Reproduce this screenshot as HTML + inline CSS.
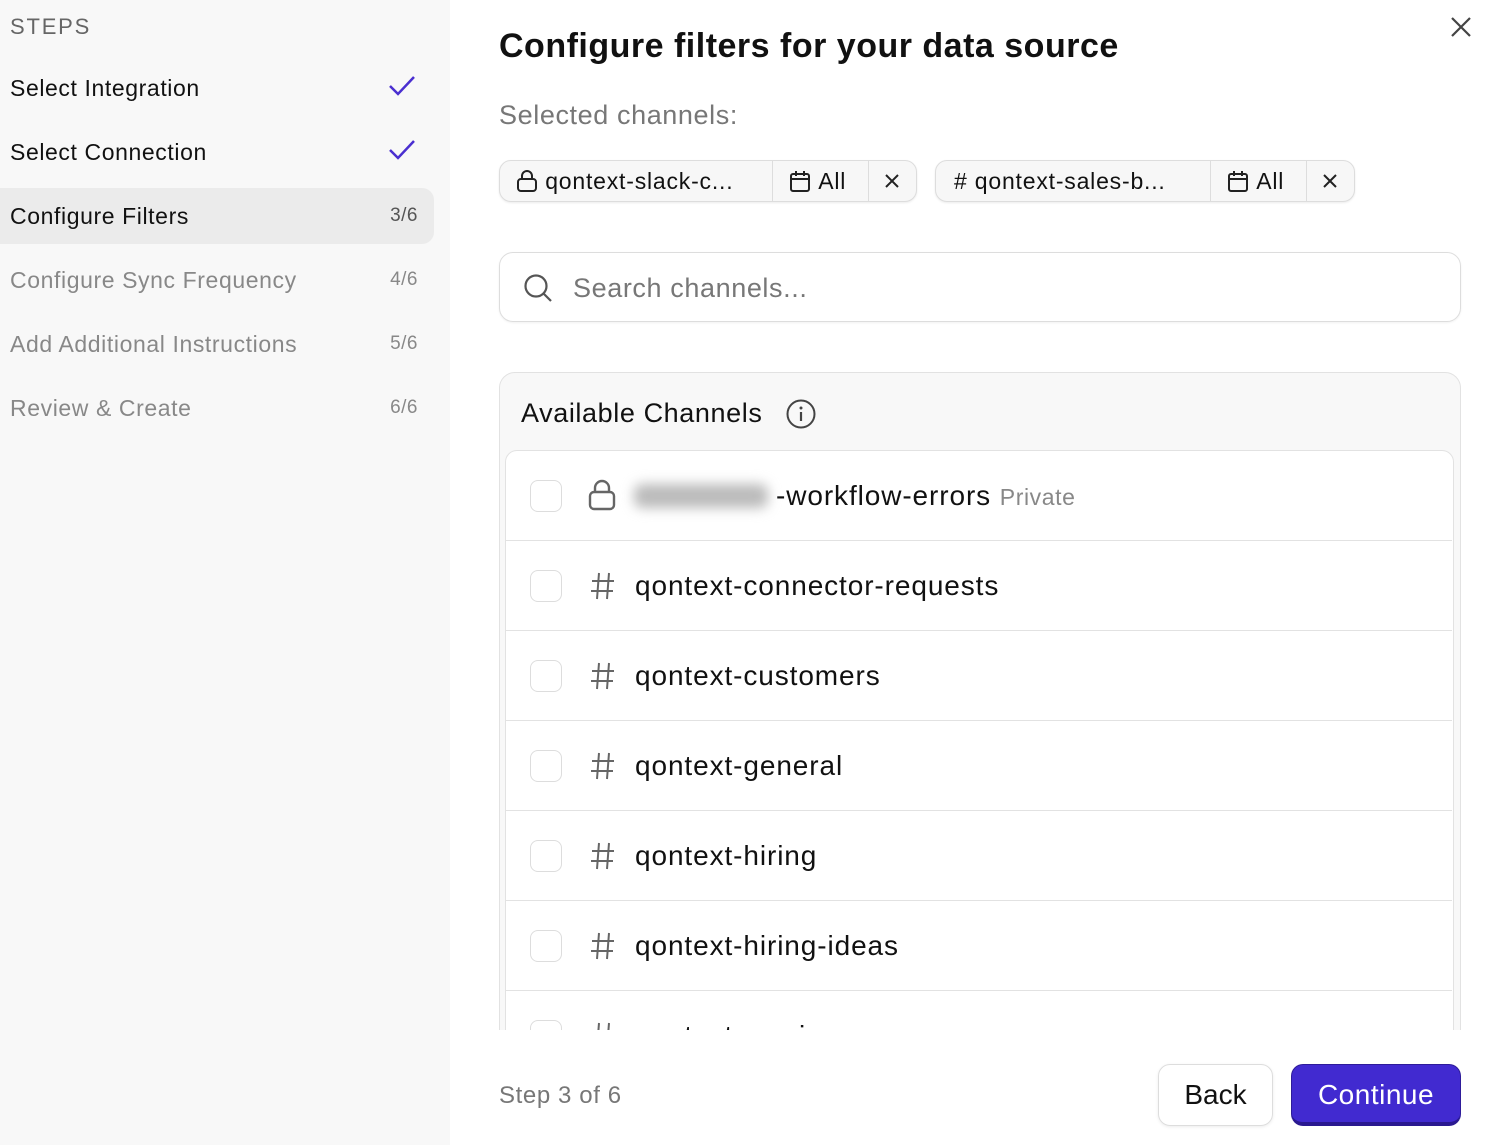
<!DOCTYPE html>
<html><head><meta charset="utf-8"><style>
*{box-sizing:border-box;margin:0;padding:0}
body{width:1489px;height:1145px;overflow:hidden;font-family:"Liberation Sans",sans-serif;background:#fff;position:relative;color:#111}
.side{position:absolute;left:0;top:0;width:450px;height:1145px;background:#f8f8f8}
.steps{position:absolute;left:10px;top:14px;font-size:22px;letter-spacing:1.8px;color:#666}
.it{position:absolute;left:0;width:434px;height:56px;font-size:23px;padding-left:10px;line-height:56px;border-radius:0 12px 12px 0;letter-spacing:0.6px}
.it .n{position:absolute;right:16px;top:0;font-size:19px;color:#888;letter-spacing:0.5px}
.it.g{color:#888}
.it svg{position:absolute;right:18px;top:14px}
.abs{position:absolute}
.chip{position:absolute;top:160px;height:42px;border:1.5px solid #ddd;border-radius:12px;background:#f7f7f7;box-shadow:0 1px 2px rgba(0,0,0,.08);font-size:23px;display:flex;align-items:center;letter-spacing:0.8px}
.chip span{display:flex;align-items:center;height:100%}
.sep{border-left:1.5px solid #ddd}
.search{position:absolute;left:499px;top:252px;width:962px;height:70px;border:1.5px solid #ddd;border-radius:14px;box-shadow:0 1px 2px rgba(0,0,0,.06)}
.panel{position:absolute;left:499px;top:372px;width:962px;height:700px;border:1.5px solid #e2e2e2;border-radius:16px;background:#f8f8f8}
.list{position:absolute;left:505px;top:450px;width:949px;height:640px;border:1.5px solid #e2e2e2;border-radius:12px;background:#fff}
.row{position:absolute;left:0;width:946px;height:90px;border-bottom:1.5px solid #e2e2e2}
.cb{position:absolute;left:24px;top:29px;width:32px;height:32px;border:1.5px solid #ddd;border-radius:8px}
.row .ic{position:absolute;left:84px;top:29px}
.row .t{position:absolute;left:129px;top:29px;font-size:28px;line-height:32px;letter-spacing:0.9px}
.foot{position:absolute;left:450px;top:1030px;width:1039px;height:115px;background:#fff}
</style></head><body>
<div class="side">
<div class="steps">STEPS</div>
<div class="it" style="top:60px">Select Integration<svg width="28" height="24" viewBox="0 0 28 24"><path d="M2 12l8 8L26 3" fill="none" stroke="#4a2fd0" stroke-width="2.5"/></svg></div>
<div class="it" style="top:124px">Select Connection<svg width="28" height="24" viewBox="0 0 28 24"><path d="M2 12l8 8L26 3" fill="none" stroke="#4a2fd0" stroke-width="2.5"/></svg></div>
<div class="it" style="top:188px;background:#ebebeb">Configure Filters<span class="n" style="color:#555">3/6</span></div>
<div class="it g" style="top:252px">Configure Sync Frequency<span class="n">4/6</span></div>
<div class="it g" style="top:316px">Add Additional Instructions<span class="n">5/6</span></div>
<div class="it g" style="top:380px">Review &amp; Create<span class="n">6/6</span></div>
</div>
<div class="abs" style="left:499px;top:27px;font-size:34px;font-weight:bold;letter-spacing:0.5px">Configure filters for your data source</div>
<svg class="abs" style="left:1450px;top:16px" width="22" height="22"><path d="M2 2L20 20M20 2L2 20" stroke="#444" stroke-width="2.2"/></svg>
<div class="abs" style="left:499px;top:100px;font-size:27px;color:#777;letter-spacing:0.6px">Selected channels:</div>
<div class="chip" style="left:499px;width:418px">
<span style="padding:0 16px;width:272px"><svg width="22" height="24" viewBox="0 0 22 24"><rect x="2" y="10" width="18" height="12" rx="3" fill="none" stroke="#222" stroke-width="2"/><path d="M6 10V7a5 5 0 0110 0v3" fill="none" stroke="#222" stroke-width="2"/></svg>&nbsp;qontext-slack-c...</span>
<span class="sep" style="padding:0 16px;width:96px"><svg width="22" height="24" viewBox="0 0 22 24"><rect x="2" y="5" width="18" height="17" rx="2" fill="none" stroke="#222" stroke-width="2"/><path d="M2 10h18M7 2v5M15 2v5" stroke="#222" stroke-width="2"/></svg>&nbsp;All</span>
<span class="sep" style="padding:0 14px"><svg width="18" height="18"><path d="M3 3L15 15M15 3L3 15" stroke="#222" stroke-width="2"/></svg></span>
</div>
<div class="chip" style="left:935px;width:420px">
<span style="padding:0 18px;width:274px">#&nbsp;qontext-sales-b...</span>
<span class="sep" style="padding:0 16px;width:96px"><svg width="22" height="24" viewBox="0 0 22 24"><rect x="2" y="5" width="18" height="17" rx="2" fill="none" stroke="#222" stroke-width="2"/><path d="M2 10h18M7 2v5M15 2v5" stroke="#222" stroke-width="2"/></svg>&nbsp;All</span>
<span class="sep" style="padding:0 14px"><svg width="18" height="18"><path d="M3 3L15 15M15 3L3 15" stroke="#222" stroke-width="2"/></svg></span>
</div>
<div class="search"><svg class="abs" style="left:23px;top:20px" width="30" height="30"><circle cx="13" cy="13" r="10.5" fill="none" stroke="#555" stroke-width="2.2"/><path d="M21 21l7 7" stroke="#555" stroke-width="2.2"/></svg><div class="abs" style="left:73px;top:20px;font-size:27px;color:#777;letter-spacing:0.6px">Search channels...</div></div>
<div class="panel"><div class="abs" style="left:21px;top:25px;font-size:27px;letter-spacing:0.6px">Available Channels</div><svg class="abs" style="left:285px;top:25px" width="32" height="32"><circle cx="16" cy="16" r="13.5" fill="none" stroke="#444" stroke-width="2"/><path d="M16 14v9" stroke="#444" stroke-width="2.2"/><circle cx="16" cy="10" r="1.5" fill="#444"/></svg></div>
<div class="list">
<div class="row" style="top:0"><div class="cb"></div><svg class="abs" style="left:82px;top:28px" width="28" height="32" viewBox="0 0 28 32"><rect x="2" y="13" width="24" height="17" rx="4" fill="none" stroke="#666" stroke-width="2.4"/><path d="M7 13V9a7 7 0 0114 0v4" fill="none" stroke="#666" stroke-width="2.4"/></svg><div class="abs" style="left:128px;top:33px;width:134px;height:24px;background:#bbb;filter:blur(6px);border-radius:8px"></div><div class="t" style="left:270px">-workflow-errors <span style="font-size:23px;color:#888;letter-spacing:0.6px">Private</span></div></div>
<div class="row" style="top:90px"><div class="cb"></div><svg class="ic" width="26" height="32" viewBox="0 0 26 32"><path d="M9 3L7 29M19 3L17 29M2 11h22M1 21h22" stroke="#666" stroke-width="2"/></svg><div class="t">qontext-connector-requests</div></div>
<div class="row" style="top:180px"><div class="cb"></div><svg class="ic" width="26" height="32" viewBox="0 0 26 32"><path d="M9 3L7 29M19 3L17 29M2 11h22M1 21h22" stroke="#666" stroke-width="2"/></svg><div class="t">qontext-customers</div></div>
<div class="row" style="top:270px"><div class="cb"></div><svg class="ic" width="26" height="32" viewBox="0 0 26 32"><path d="M9 3L7 29M19 3L17 29M2 11h22M1 21h22" stroke="#666" stroke-width="2"/></svg><div class="t">qontext-general</div></div>
<div class="row" style="top:360px"><div class="cb"></div><svg class="ic" width="26" height="32" viewBox="0 0 26 32"><path d="M9 3L7 29M19 3L17 29M2 11h22M1 21h22" stroke="#666" stroke-width="2"/></svg><div class="t">qontext-hiring</div></div>
<div class="row" style="top:450px"><div class="cb"></div><svg class="ic" width="26" height="32" viewBox="0 0 26 32"><path d="M9 3L7 29M19 3L17 29M2 11h22M1 21h22" stroke="#666" stroke-width="2"/></svg><div class="t">qontext-hiring-ideas</div></div>
<div class="row" style="top:540px"><div class="cb"></div><svg class="ic" width="26" height="32" viewBox="0 0 26 32"><path d="M9 3L7 29M19 3L17 29M2 11h22M1 21h22" stroke="#666" stroke-width="2"/></svg><div class="t">qontext-music</div></div>
</div>
<div class="foot">
<div class="abs" style="left:49px;top:52px;font-size:24px;color:#777;letter-spacing:0.6px">Step 3 of 6</div>
<div class="abs" style="left:708px;top:34px;width:115px;height:62px;border:1.5px solid #ddd;border-radius:12px;font-size:28px;line-height:60px;text-align:center;box-shadow:0 1px 3px rgba(0,0,0,.08)">Back</div>
<div class="abs" style="left:841px;top:34px;width:170px;height:62px;background:#412ad0;border:1.5px solid #2e1c9a;border-bottom:4px solid #2a1990;border-radius:12px;color:#fff;font-size:28px;line-height:60px;text-align:center;letter-spacing:0.5px">Continue</div>
</div>
</body></html>
